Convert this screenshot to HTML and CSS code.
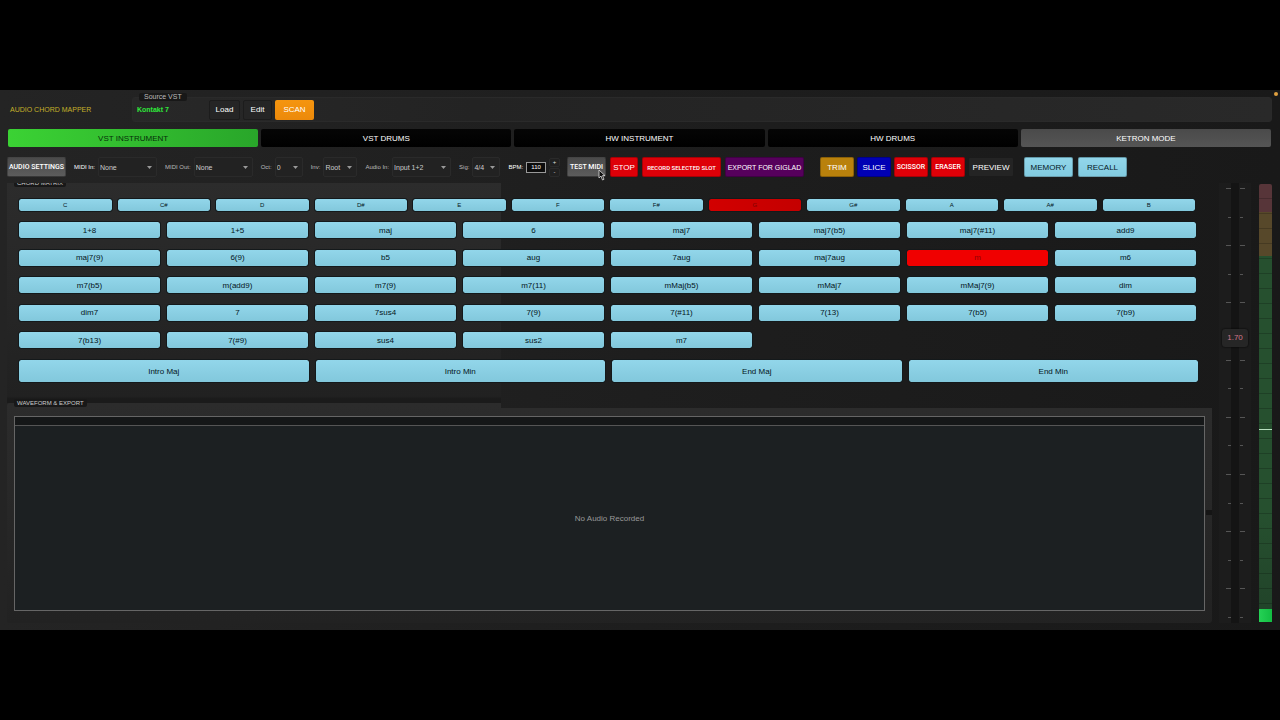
FILE: index.html
```html
<!DOCTYPE html>
<html lang="en">
<head>
    <meta charset="UTF-8">
    <meta name="viewport" content="width=device-width, initial-scale=1.0">
    <title>Audio Chord Mapper</title>
    <link rel="stylesheet" href="styles.css">
</head>
<body>
    <div class="app">
        <span class="status-dot"></span>

        <header class="header">
            <h1 class="brand">AUDIO CHORD MAPPER</h1>
            <div class="source">
                <span class="source-title">Source VST</span>
                <span class="source-name">Kontakt 7</span>
                <button class="small-btn load">Load</button>
                <button class="small-btn edit">Edit</button>
                <button class="small-btn scan">SCAN</button>
            </div>
        </header>

        <nav class="tabs">
            <button class="tab active">VST INSTRUMENT</button>
            <button class="tab">VST DRUMS</button>
            <button class="tab">HW INSTRUMENT</button>
            <button class="tab">HW DRUMS</button>
            <button class="tab ketron">KETRON MODE</button>
        </nav>

        <div class="toolbar">
            <div class="group settings">
                <button class="btn gray narrow w-59">AUDIO SETTINGS</button>
                <div class="field">
                    <label class="bright" for="midi-in">MIDI In:</label>
                    <select class="w-59" id="midi-in"><option>None</option></select>
                </div>
                <div class="field">
                    <label for="midi-out">MIDI Out:</label>
                    <select class="w-59" id="midi-out"><option>None</option></select>
                </div>
                <div class="field">
                    <label for="oct">Oct:</label>
                    <select class="w-28" id="oct"><option>0</option></select>
                </div>
                <div class="field">
                    <label for="inv">Inv:</label>
                    <select class="w-34" id="inv"><option>Root</option></select>
                </div>
                <div class="field">
                    <label for="audio-in">Audio In:</label>
                    <select class="w-59" id="audio-in"><option>Input 1+2</option></select>
                </div>
                <div class="field">
                    <label for="sig">Sig:</label>
                    <select class="w-28" id="sig"><option>4/4</option></select>
                </div>
                <div class="field">
                    <label class="bright" for="bpm">BPM:</label>
                    <input type="text" id="bpm" value="110">
                    <div class="spin">
                        <button aria-label="BPM up">+</button>
                        <button aria-label="BPM down">-</button>
                    </div>
                </div>
            </div>
            <div class="group">
                <button class="btn gray w-39 narrow test">TEST MIDI
                    <svg class="cursor" viewBox="0 0 8 12" width="8" height="12">
                        <path d="M1 1v8l2-2 1.500 4 1.500-.700L4.500 6.600H7z" fill="#111" stroke="#ddd" stroke-width=".8"/>
                    </svg>
                </button>
                <button class="btn red w-28">STOP</button>
                <button class="btn red narrow record w-79">RECORD SELECTED SLOT</button>
                <button class="btn purple w-79">EXPORT FOR GIGLAD</button>
            </div>
            <div class="group edit-tools">
                <button class="btn gold w-34">TRIM</button>
                <button class="btn blue w-34">SLICE</button>
                <button class="btn red narrow w-34">SCISSOR</button>
                <button class="btn red narrow w-34">ERASER</button>
                <button class="btn dark w-46">PREVIEW</button>
            </div>
            <div class="group memory">
                <button class="btn sky w-49">MEMORY</button>
                <button class="btn sky w-49">RECALL</button>
            </div>
        </div>

        <main class="workspace">
            <div class="panels">
                <section class="matrix">
                    <h2 class="legend">CHORD MATRIX</h2>
                    <div class="notes">
                        <button>C</button>
                        <button>C#</button>
                        <button>D</button>
                        <button>D#</button>
                        <button>E</button>
                        <button>F</button>
                        <button>F#</button>
                        <button class="selected">G</button>
                        <button>G#</button>
                        <button>A</button>
                        <button>A#</button>
                        <button>B</button>
                    </div>
                    <div class="chords">
                        <button>1+8</button>
                        <button>1+5</button>
                        <button>maj</button>
                        <button>6</button>
                        <button>maj7</button>
                        <button>maj7(b5)</button>
                        <button>maj7(#11)</button>
                        <button>add9</button>
                        <button>maj7(9)</button>
                        <button>6(9)</button>
                        <button>b5</button>
                        <button>aug</button>
                        <button>7aug</button>
                        <button>maj7aug</button>
                        <button class="selected">m</button>
                        <button>m6</button>
                        <button>m7(b5)</button>
                        <button>m(add9)</button>
                        <button>m7(9)</button>
                        <button>m7(11)</button>
                        <button>mMaj(b5)</button>
                        <button>mMaj7</button>
                        <button>mMaj7(9)</button>
                        <button>dim</button>
                        <button>dim7</button>
                        <button>7</button>
                        <button>7sus4</button>
                        <button>7(9)</button>
                        <button>7(#11)</button>
                        <button>7(13)</button>
                        <button>7(b5)</button>
                        <button>7(b9)</button>
                        <button>7(b13)</button>
                        <button>7(#9)</button>
                        <button>sus4</button>
                        <button>sus2</button>
                        <button>m7</button>
                    </div>
                    <div class="parts">
                        <button>Intro Maj</button>
                        <button>Intro Min</button>
                        <button>End Maj</button>
                        <button>End Min</button>
                    </div>
                </section>

                <section class="waveform">
                    <h2 class="legend">WAVEFORM &amp; EXPORT</h2>
                    <div class="wave">
                        <div class="ruler"></div>
                        <p class="empty">No Audio Recorded</p>
                    </div>
                </section>
            </div>

            <div class="fader">
                <div class="ticks">
                    <i></i><i></i><i></i><i></i><i></i><i></i><i></i><i></i>
                    <i></i><i></i><i></i><i></i><i></i><i></i><i></i><i></i>
                </div>
                <input type="range" id="gain" min="0" max="1000" value="653" aria-label="Gain">
                <output class="gain-value" for="gain">1.70</output>
            </div>

            <div class="meter">
                <div class="peak"></div>
                <div class="level"></div>
            </div>
        </main>
    </div>
</body>
</html>
```
FILE: styles.css
```css
* {
    box-sizing: border-box;
}

body {
    margin: 0;
    min-height: 100vh;
    display: flex;
    flex-direction: column;
    justify-content: center;
    background: #000;
    color: #ddd;
    font-family: "Liberation Sans", Arial, sans-serif;
    font-size: 8px;
}

button, select, input {
    margin: 0;
    padding: 0;
    border: none;
    border-radius: 2px;
    color: inherit;
    font: inherit;
}

h1, h2, p {
    margin: 0;
    font-weight: normal;
}

.app {
    position: relative;
    padding: 7px 8px 7px 7px;
    background: linear-gradient(to right, #242424, #1e1e1e 50%, #191919);
}

.status-dot {
    position: absolute;
    top: 2px;
    right: 2px;
    width: 4px;
    height: 4px;
    border-radius: 50%;
    background: #e0a040;
}

/* Header */
.header {
    display: flex;
    align-items: center;
    height: 25px;
}

.brand {
    width: 125px;
    padding-left: 3px;
    font-size: 7px;
    color: #c4b02a;
}

.source {
    position: relative;
    flex: 1;
    display: flex;
    align-items: center;
    height: 100%;
    padding-left: 4px;
    border: 1px solid #2a2a2a;
    border-radius: 3px;
    background: linear-gradient(to right, #282828, #232323 30%, #292929);
}

.source-title {
    position: absolute;
    top: -5px;
    left: 6px;
    padding: 0 5px;
    border-radius: 2px;
    background: #181818;
    font-size: 7px;
    line-height: 8px;
    color: #bbb;
}

.source-name {
    width: 72px;
    font-size: 7px;
    font-weight: bold;
    color: #2fe83b;
}

.small-btn {
    height: 20px;
    border: 1px solid #1c1c1c;
    background: #252525;
    color: #fff;
}

.load {
    width: 31px;
    margin-right: 3px;
}

.edit {
    width: 29px;
    margin-right: 3px;
}

.scan {
    width: 39px;
    border: none;
    background: linear-gradient(#f5950f, #ec890a);
}

/* Tabs */
.tabs {
    display: flex;
    gap: 3px;
    margin: 7px 0 10px;
    padding: 0 1px;
}

.tab {
    flex: 1;
    height: 18px;
    background: linear-gradient(#050505, #000);
    color: #fff;
}

.tab.active {
    background: linear-gradient(to right, #3bd234, #29a62a);
    color: #06300a;
}

.tab.ketron {
    background: linear-gradient(#4a4a4a, #555);
}

/* Toolbar */
.toolbar,
.group,
.field {
    display: flex;
    align-items: center;
}

.toolbar {
    margin-bottom: 6px;
}

.group {
    gap: 4px;
}

.settings {
    width: 560px;
    gap: 8px;
}

.field {
    gap: 3px;
}

.field label {
    font-size: 6px;
    white-space: nowrap;
    color: #bbb;
}

.field .bright {
    color: #fff;
}

.field select {
    appearance: none;
    height: 20px;
    padding-left: 1px;
    border: 1px solid #2a2a2a;
    background: #222 url("data:image/svg+xml,%3Csvg xmlns='http://www.w3.org/2000/svg' viewBox='0 0 5 3'%3E%3Cpath d='M0 0h5L2.5 3z' fill='%23999'/%3E%3C/svg%3E") no-repeat right 4px center / 5px 3px;
    font-size: 7px;
    color: #ccc;
}

.field input {
    width: 20px;
    height: 11px;
    border: 1px solid #999;
    border-radius: 0;
    background: #0c0c0c;
    font-size: 6px;
    text-align: center;
    color: #fff;
}

.spin {
    display: flex;
    flex-direction: column;
    gap: 1px;
}

.spin button {
    width: 11px;
    height: 9px;
    border: 1px solid #2a2a2a;
    background: #202020;
    font-size: 6px;
    line-height: 6px;
}

.btn {
    flex: none;
    height: 20px;
    border: 1px solid rgba(0, 0, 0, 0.25);
    color: #fff;
    white-space: nowrap;
}

.btn.narrow {
    font-family: Roboto, "Liberation Sans", Arial, sans-serif;
    font-size: 7px;
    font-weight: 500;
}

.btn.record {
    font-size: 6px;
}

.gray { background: linear-gradient(#4a4a4a, #5c5c5c); }
.red { background: #de0008; }
.purple { background: #56005c; font-size: 7px; }
.gold { background: #b9810c; }
.blue { background: #0000b4; }
.dark { background: #242424; }
.btn.sky { background: linear-gradient(#92d6ea, #82cbe0); color: #06181e; }

.w-28 { width: 28px; }
.w-34 { width: 34px; }
.w-39 { width: 39px; }
.w-46 { width: 46px; }
.w-49 { width: 49px; }
.w-59 { width: 59px; }
.w-79 { width: 79px; }

.test {
    position: relative;
}

.cursor {
    position: absolute;
    right: -1px;
    bottom: -5px;
}

.edit-tools {
    gap: 3px;
    margin-left: 16px;
}

.memory {
    gap: 5px;
    margin-left: 10px;
}

/* Workspace */
.workspace {
    display: flex;
}

.panels {
    flex: 1;
    margin-right: 7px;
}

.legend {
    position: absolute;
    left: 7px;
    padding: 0 3px;
    border-radius: 2px;
    background: #181818;
    font-size: 6px;
    line-height: 8px;
    color: #ccc;
}

.matrix {
    position: relative;
    overflow: hidden;
    padding: 16px 14px 21px 12px;
    background: linear-gradient(#2c2c2c, #212121 97%, #1b1b1b 98%) no-repeat 0 0 / 41% 100%;
}

.matrix .legend {
    top: -4px;
}

.matrix button {
    border-radius: 2px;
    outline: 1px solid #14191b;
    background: linear-gradient(#92d6ea, #82c8dc);
    color: #04141a;
}

.matrix .selected {
    background: linear-gradient(to right, #d20000, #c40000);
    color: #7d0000;
}

.matrix .chords .selected {
    background: #f00000;
    color: #900000;
}

.notes {
    display: grid;
    grid-template-columns: repeat(12, 1fr);
    gap: 6px;
    padding-right: 3px;
    margin-bottom: 11px;
}

.notes button {
    height: 12px;
    font-size: 6px;
}

.chords {
    display: grid;
    grid-template-columns: repeat(8, 1fr);
    column-gap: 7px;
    align-content: space-between;
    height: 126px;
    padding-right: 2px;
    margin-bottom: 12px;
}

.chords button {
    height: 16px;
}

.parts {
    display: grid;
    grid-template-columns: repeat(4, 1fr);
    gap: 7px;
}

.parts button {
    height: 22px;
}

.waveform {
    position: relative;
    padding: 13px 7px 12px;
    border-radius: 3px;
    background: linear-gradient(#2c2c2c, #222) no-repeat 0 0 / 41% 100%,
                linear-gradient(#2c2c2c, #222) no-repeat 0 5px / 100% 100%;
}

/* notch where the two lower boxes meet */
.waveform::after {
    content: "";
    position: absolute;
    top: 107px;
    right: 0;
    width: 6px;
    height: 5px;
    background: #151515;
}

.waveform .legend {
    top: -4px;
}

.wave {
    display: flex;
    flex-direction: column;
    height: 195px;
    border: 1px solid #666;
    background: #1c2022;
}

.ruler {
    height: 9px;
    border-bottom: 1px solid #555;
    background: #151718;
}

.empty {
    margin: auto;
    color: #999;
}

/* Output fader */
.fader {
    position: relative;
    width: 32px;
    margin-right: 8px;
    background: linear-gradient(to right, #1c1c1c 12px, #141414 12px, #141414 20px, #1c1c1c 20px);
}

.ticks {
    display: flex;
    flex-direction: column;
    justify-content: space-between;
    height: 100%;
    padding: 5px 6px 5px 7px;
}

.ticks i {
    height: 1px;
    border: solid #555;
    border-width: 0 5px;
}

.ticks i:nth-child(even) {
    width: 15px;
    margin-left: 2px;
    border-width: 0 3px;
}

.fader input {
    position: absolute;
    top: 0;
    left: 3px;
    width: 26px;
    height: 100%;
    appearance: none;
    background: none;
    writing-mode: vertical-lr;
    direction: rtl;
}

.fader input::-webkit-slider-thumb {
    appearance: none;
    width: 26px;
    height: 18px;
    border-radius: 3px;
    background: #262626;
    box-shadow: 0 0 2px #000;
}

.gain-value {
    position: absolute;
    top: 35%;
    left: 0;
    width: 100%;
    transform: translateY(-50%);
    text-align: center;
    color: #d0788a;
    pointer-events: none;
}

/* Level meter */
.meter {
    position: relative;
    width: 13px;
    margin: 1px 0;
    border-radius: 2px;
    background: repeating-linear-gradient(transparent 0 14px, rgba(0, 0, 0, 0.2) 14px 15px),
                linear-gradient(#573539 6.5%, #57482a 6.5% 16.5%, #26502f 16.5% 75%, #214229);
}

.peak {
    position: absolute;
    top: 56%;
    width: 100%;
    height: 1px;
    background: #b8e0c0;
}

.level {
    position: absolute;
    bottom: 0;
    width: 100%;
    height: 13px;
    background: linear-gradient(to right, #25d155, #12bd42);
}
```
